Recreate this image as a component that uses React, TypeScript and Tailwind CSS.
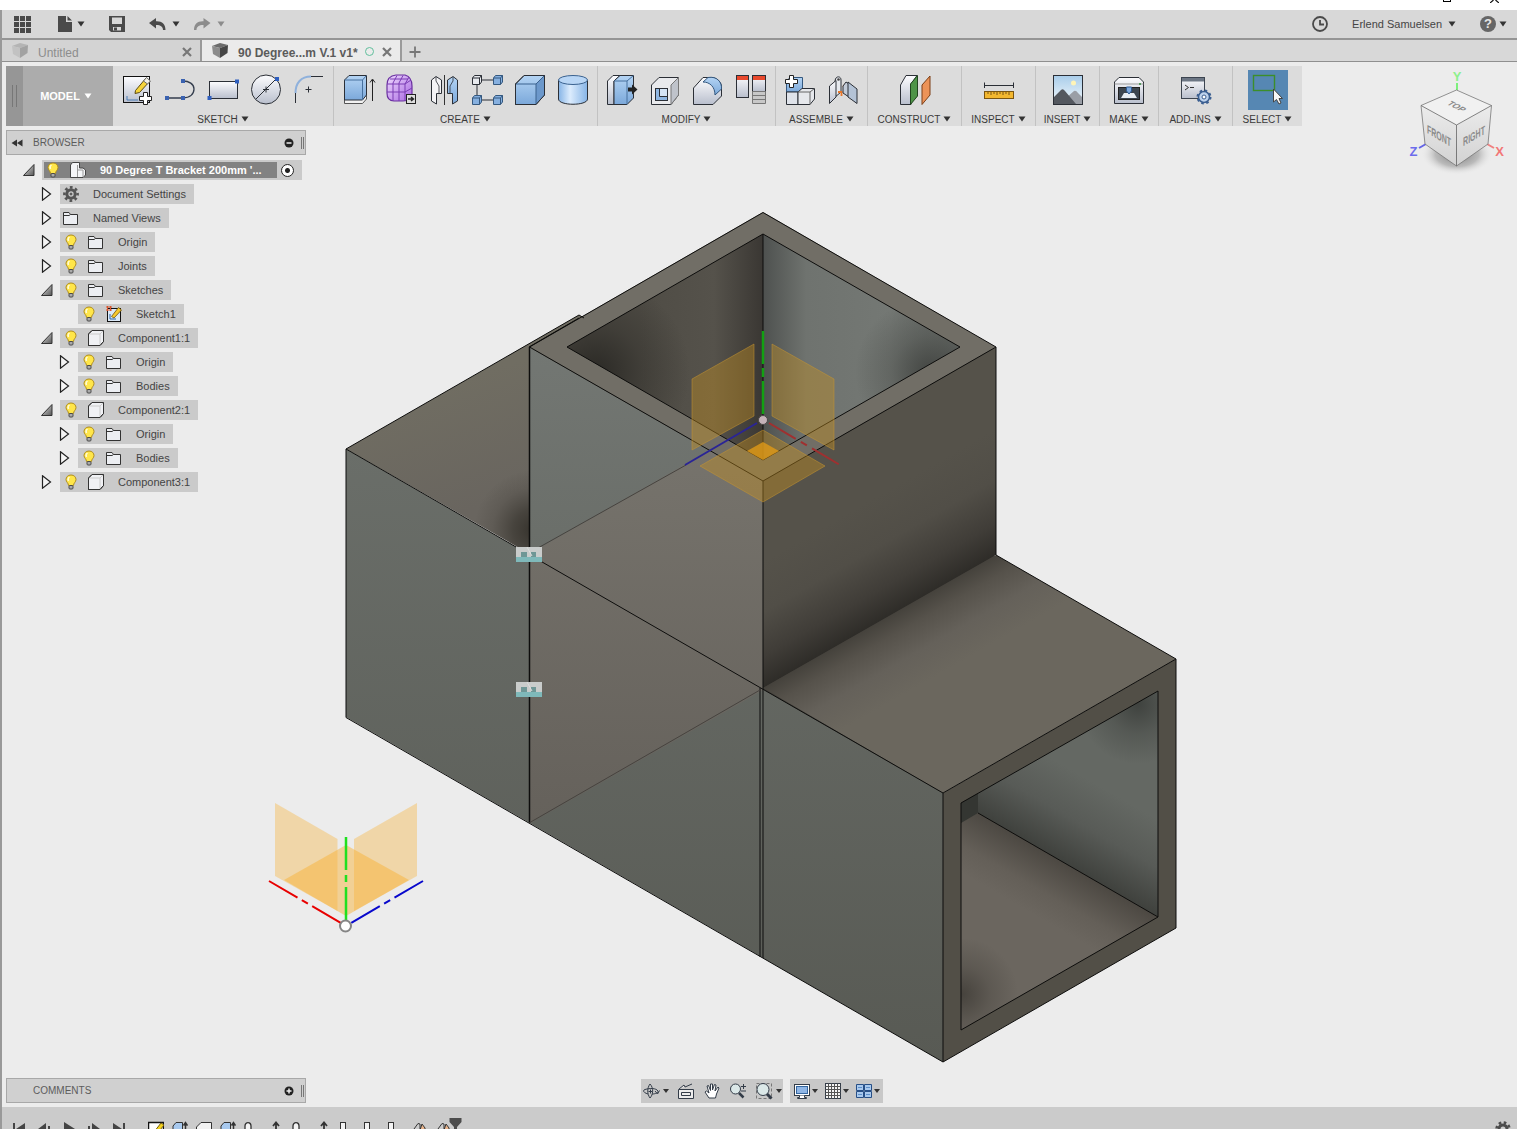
import React, { useState } from "react";

type IconFn = () => React.ReactElement;

const INK = "#2b2f36";

/* ---------- Petits éléments communs ---------- */

function Caret({ className = "text-[#333]" }: { className?: string }) {
  return (
    <svg viewBox="0 0 8 6" className={`h-[6px] w-[8px] shrink-0 ${className}`} aria-hidden="true">
      <path d="M0.500 0.500H7.500L4 5.500Z" fill="currentColor" />
    </svg>
  );
}

function Svg36({ children }: { children: React.ReactNode }) {
  return (
    <svg viewBox="0 0 36 36" className="h-9 w-9" fill="none" aria-hidden="true">
      {children}
    </svg>
  );
}

function SharedDefs() {
  return (
    <svg className="absolute h-0 w-0" aria-hidden="true">
      <defs>
        <linearGradient id="silver" x1="0" y1="0" x2="0" y2="1">
          <stop offset="0" stopColor="#fdfdff" />
          <stop offset="1" stopColor="#b9bfcd" />
        </linearGradient>
        <linearGradient id="blue" x1="0" y1="0" x2="0" y2="1">
          <stop offset="0" stopColor="#b4d4f4" />
          <stop offset="1" stopColor="#7ba8da" />
        </linearGradient>
        <linearGradient id="cyl" x1="0" y1="0" x2="1" y2="0">
          <stop offset="0" stopColor="#86b4e6" />
          <stop offset="0.4" stopColor="#dcecfd" />
          <stop offset="1" stopColor="#86b4e6" />
        </linearGradient>
        <linearGradient id="purple" x1="0" y1="0" x2="1" y2="1">
          <stop offset="0" stopColor="#f0dcff" />
          <stop offset="1" stopColor="#a765e0" />
        </linearGradient>
        <linearGradient id="sky" x1="0" y1="0" x2="0" y2="1">
          <stop offset="0" stopColor="#a9cdea" />
          <stop offset="1" stopColor="#f3f8fc" />
        </linearGradient>
        <linearGradient id="tri" x1="0" y1="0" x2="1" y2="1">
          <stop offset="0" stopColor="#e8e8e8" />
          <stop offset="1" stopColor="#555" />
        </linearGradient>
      </defs>
    </svg>
  );
}

/* ---------- Icônes de la barre d'outils ---------- */

const SketchIcon: IconFn = () => (
  <Svg36>
    <rect x="4.500" y="4.500" width="26" height="26" fill="url(#silver)" stroke="#111" />
    <path d="M8 24V28H19" stroke="#4a7db5" />
    <path d="M16.500 18.500L27 6L31 9L20.500 20.500L16 21.500Z" fill="#f5d33a" stroke="#5b4a12" />
    <path d="M24.500 9L27.500 5.500L31.500 9L28.500 12Z" fill="#f3f0e6" stroke="#6b6b6b" />
    <path d="M24.500 20.500H28.500V24.500H32.500V28.500H28.500V32.500H24.500V28.500H20.500V24.500H24.500Z" fill="#fff" stroke="#222" />
  </Svg36>
);

const SplineIcon: IconFn = () => (
  <Svg36>
    <path d="M5 26H21C28 26 32 22 32 17C32 12 27 9 21 9" stroke="#333d4d" strokeWidth="1.300" />
    <path d="M3 24h4v4h-4zM19 24h4v4h-4zM19 7h4v4h-4z" fill="#3a62b0" />
  </Svg36>
);

const RectIcon: IconFn = () => (
  <Svg36>
    <rect x="4.500" y="9.500" width="28" height="17" fill="url(#silver)" stroke={INK} />
    <path d="M2.500 24h4v4h-4zM30 7.500h4v4h-4z" fill="#2f5fc0" />
  </Svg36>
);

const CircleIcon: IconFn = () => (
  <Svg36>
    <circle cx="18" cy="17.500" r="14.500" fill="url(#silver)" stroke={INK} />
    <path d="M8 27L28 7M18 14.500V20.500M15 17.500H21" stroke={INK} />
    <path d="M27 5h4v4h-4z" fill="#2f5fc0" />
  </Svg36>
);

const FilletIcon: IconFn = () => (
  <Svg36>
    <path d="M4.500 31V21M20 4.500H32" stroke={INK} />
    <path d="M4.500 21C4.500 11 10 4.500 20 4.500" stroke="#8fb1dc" strokeWidth="2" />
    <path d="M17.500 14.500V20.500M14.500 17.500H20.500" stroke={INK} />
  </Svg36>
);

const ExtrudeIcon: IconFn = () => (
  <Svg36>
    <path d="M4.500 27H22.500L26.500 21V27L22.500 31.500H4.500Z" fill="#f2f2f2" stroke="#555" />
    <path d="M4.500 8L9 3.500H26.500V23L22.500 28H4.500Z" fill="url(#blue)" stroke={INK} />
    <path d="M4.500 8H22.500L26.500 3.500M22.500 8V28" stroke="#46709e" />
    <path d="M32.500 29V8M30 10.500L32.500 7L35 10.500" stroke="#222" />
  </Svg36>
);

const FormIcon: IconFn = () => (
  <Svg36>
    <path d="M4 13Q4 4 13 3H22Q29 5 29 14V22Q29 29 20 29H11Q4 29 4 21Z" fill="url(#purple)" stroke="#6a30a0" strokeWidth="1.200" />
    <path d="M4 12H22L28 8M4 20H22L29 16M10 29V11L14 3.500M16 29V11L20 3.500M22 29V12L26 5M7 7H25" stroke="#7a3cb4" />
    <rect x="23.500" y="22.500" width="9" height="9" fill="#ddd" stroke="#222" />
    <path d="M25 27H30M28 25L30.500 27L28 29" stroke="#222" strokeWidth="1.400" />
  </Svg36>
);

const MirrorIcon: IconFn = () => (
  <Svg36>
    <path d="M18.500 3V33" stroke="#333" />
    <path d="M5.500 8L10 4.500L15.500 8V21.500H10.500V32L5.500 29Z" fill="#f4f4f6" stroke={INK} />
    <path d="M31.500 8L27 4.500L21.500 8V21.500H26.500V32L31.500 29Z" fill="url(#blue)" stroke={INK} />
    <path d="M10 5V9L13 14V21M27 5V9L24 14V21" stroke={INK} strokeWidth="0.800" />
  </Svg36>
);

const PatternIcon: IconFn = () => (
  <Svg36>
    <path d="M8 12V25M13 8H24M13 28H24" stroke={INK} />
    <path d="M3.500 6L5.500 3.500H12.500V10L10.500 12.500H3.500ZM3.500 6H10.500V12.500M10.500 6L12.500 3.500" fill="#e8eaee" stroke={INK} />
    {[
      [21, 0],
      [0, 20],
      [21, 20],
    ].map(([x, y]) => (
      <path key={`${x}-${y}`} transform={`translate(${x} ${y})`} d="M3.500 6L5.500 3.500H12.500V10L10.500 12.500H3.500ZM3.500 6H10.500V12.500M10.500 6L12.500 3.500" fill="#86b0e0" stroke="#34587f" />
    ))}
  </Svg36>
);

const BoxIcon: IconFn = () => (
  <Svg36>
    <path d="M3.500 12L12 3.500H32.500V23L24 32.500H3.500Z" fill="url(#blue)" stroke={INK} />
    <path d="M24 12L32.500 3.500V23L24 32.500Z" fill="#6c98cb" />
    <path d="M3.500 12H24L32.500 3.500M24 12V32.500" stroke="#3b628f" />
    <path d="M3.500 12L12 3.500H32.500V23L24 32.500H3.500Z" stroke={INK} />
  </Svg36>
);

const CylinderIcon: IconFn = () => (
  <Svg36>
    <path d="M3.500 8V27C3.500 34 32.500 34 32.500 27V8Z" fill="url(#cyl)" stroke={INK} />
    <ellipse cx="18" cy="8" rx="14.500" ry="4.500" fill="#b9d6f5" stroke="#3b628f" />
  </Svg36>
);

const PressPullIcon: IconFn = () => (
  <Svg36>
    <path d="M3.500 9L9 3.500H16L10 9V32.500H3.500Z" fill="url(#silver)" stroke={INK} />
    <path d="M10 9L16 3.500H29.500V26L23 32.500H10Z" fill="url(#blue)" stroke={INK} />
    <path d="M10 9H23L29.500 3.500M23 9V32.500" stroke="#46709e" />
    <path d="M24 15.500H28V12.500L33.500 17.500L28 22.500V19.500H24Z" fill="#222" />
  </Svg36>
);

const ShellIcon: IconFn = () => (
  <Svg36>
    <path d="M4.500 13L12 5.500H31.500V23L24 32.500H4.500Z" fill="#e9eaed" stroke={INK} />
    <path d="M24 13L31.500 5.500V23L24 32.500Z" fill="#bfc3cb" stroke="#777" />
    <rect x="8.500" y="16.500" width="12" height="12" fill="#8fb6e2" stroke={INK} />
    <path d="M12.500 16.500V24.500H20.500" stroke={INK} />
    <rect x="13" y="17" width="7" height="7" fill="#d5e4f5" />
  </Svg36>
);

const ModFilletIcon: IconFn = () => (
  <Svg36>
    <path d="M3.500 16L13 5.500H22C28 6 32 11 31.500 16V24L23 32.500H3.500Z" fill="url(#silver)" stroke={INK} />
    <path d="M13 10L18 5.500C27 4 32 10 31.500 17L25 23C25 15 20 10 13 10Z" fill="url(#blue)" stroke="#34587f" />
  </Svg36>
);

const ParamsIcon: IconFn = () => (
  <Svg36>
    <rect x="3.500" y="3.500" width="12" height="22" fill="url(#silver)" stroke={INK} />
    <rect x="4" y="4" width="11" height="4" fill="#e8492d" />
    <rect x="19.500" y="3.500" width="13" height="16" fill="url(#silver)" stroke={INK} />
    <rect x="20" y="4" width="12" height="4" fill="#e8492d" />
    <path d="M19.500 19.500H32.500V31.500H19.500ZM19.500 23.500H32.500M19.500 27.500H32.500" fill="#c8c8c8" stroke="#777" />
  </Svg36>
);

const ComponentIcon: IconFn = () => (
  <Svg36>
    <path d="M4.500 9L8 5.500H20.500V18L16 20H4.500Z" fill="url(#blue)" stroke="#34587f" />
    <path d="M4.500 20H16V32.500H4.500Z" fill="#dfe3ea" stroke={INK} />
    <path d="M16 20L20 16.500H32.500V27L28 32.500H16Z" fill="#e6e8ec" stroke={INK} />
    <path d="M16 20H28L32.500 16.500M28 20V32.500" stroke="#666" />
    <path d="M7.500 3.500H11.500V7.500H15.500V11.500H11.500V15.500H7.500V11.500H3.500V7.500H7.500Z" fill="#fff" stroke="#222" />
  </Svg36>
);

const JointIcon: IconFn = () => (
  <Svg36>
    <path d="M9 13L10.500 7C11.500 4 16 4 16 8V20L9 26Z" fill="#e6e9ee" stroke={INK} />
    <path d="M4.500 14L11 8.500V25L4.500 31.500Z" fill="url(#silver)" stroke={INK} />
    <circle cx="13.500" cy="7.500" r="1.300" fill="#444" />
    <path d="M13 20H16.500V24M18 15L21 12" stroke="#e8772a" strokeWidth="1.800" />
    <path d="M18 14L21 10L24 12V25L18 21Z" fill="#c2cbd8" stroke={INK} />
    <path d="M23 10L32 17V31.500L23 25Z" fill="#b4c3d6" stroke={INK} />
  </Svg36>
);

const ConstructIcon: IconFn = () => (
  <Svg36>
    <path d="M3.500 13L9 3.500H20L14 12V32.500H3.500Z" fill="url(#silver)" stroke={INK} />
    <path d="M13.500 12L20.500 3.500V24L13.500 32.500Z" fill="#4e9448" stroke="#21451f" />
    <path d="M25 13L33 4V23L25 32.500Z" fill="#ec9358" stroke="#7c3f16" />
  </Svg36>
);

const InspectIcon: IconFn = () => (
  <Svg36>
    <path d="M3.500 13.500H32.500M3.500 10.500V16M32.500 10.500V16" stroke={INK} />
    <rect x="3.500" y="19.500" width="29" height="7" fill="#f3b72e" stroke="#7b5510" />
    <path d="M7 20v2M10 20v3M13 20v2M16 20v3M19 20v2M22 20v3M25 20v2M28 20v3" stroke="#7b5510" />
  </Svg36>
);

const InsertIcon: IconFn = () => (
  <Svg36>
    <rect x="3.500" y="3.500" width="29" height="29" fill="url(#sky)" />
    <circle cx="23.500" cy="11" r="2.500" fill="#fff4b8" />
    <path d="M16 26L24 19Q26 18 28 21L32 25V32H16Z" fill="#9a9ea6" />
    <path d="M4 25L11 18Q13 16 15 19L26 32H4Z" fill="#54585f" />
    <rect x="3.500" y="3.500" width="29" height="29" stroke={INK} />
  </Svg36>
);

const MakeIcon: IconFn = () => (
  <Svg36>
    <path d="M3.500 10L8 5.500H28L32.500 10V31.500H3.500Z" fill="url(#silver)" stroke={INK} />
    <path d="M3.500 12H32.500" stroke="#999" />
    <circle cx="29" cy="12" r="1" fill="#2f8c3a" />
    <rect x="7.500" y="15.500" width="21" height="12" fill="#3d4650" stroke="#222" />
    <path d="M10 26L13 21H23L26 26Z" fill="#e8edf3" />
    <path d="M15.500 15H20.500V19L18 22L15.500 19Z" fill="#7fa9dc" stroke="#2e5b94" />
  </Svg36>
);

const AddInsIcon: IconFn = () => (
  <Svg36>
    <rect x="3.500" y="5.500" width="23" height="21" fill="url(#silver)" stroke="#3c4450" />
    <path d="M4 6H26V9.500H4Z" fill="#6c7684" />
    <path d="M7 13L10.500 15.500L7 18M12 15.500H16" stroke="#333" />
    <circle cx="26" cy="25" r="5.500" fill="#bdd2ec" stroke="#3b5f91" strokeWidth="1.500" />
    <circle cx="26" cy="25" r="6.500" stroke="#3b5f91" strokeWidth="2" strokeDasharray="2.500 2.600" />
    <circle cx="26" cy="25" r="2" fill="#fff" stroke="#3b5f91" />
  </Svg36>
);

const SelectIcon: IconFn = () => (
  <Svg36>
    <rect x="3.500" y="3.500" width="21" height="15" stroke="#3c8e2a" strokeWidth="1.400" />
    <path d="M23.500 17V30L26.500 27.500L29 32L31 31L29 26.500H32.500Z" fill="#f7f7f7" stroke="#444" />
  </Svg36>
);

interface ToolGroup {
  label: string;
  tools: { name: string; icon: IconFn }[];
}

const TOOL_GROUPS: ToolGroup[] = [
  {
    label: "SKETCH",
    tools: [
      { name: "Create Sketch", icon: SketchIcon },
      { name: "Line", icon: SplineIcon },
      { name: "Rectangle", icon: RectIcon },
      { name: "Circle", icon: CircleIcon },
      { name: "Fillet", icon: FilletIcon },
    ],
  },
  {
    label: "CREATE",
    tools: [
      { name: "Extrude", icon: ExtrudeIcon },
      { name: "Create Form", icon: FormIcon },
      { name: "Mirror", icon: MirrorIcon },
      { name: "Pattern", icon: PatternIcon },
      { name: "Box", icon: BoxIcon },
      { name: "Cylinder", icon: CylinderIcon },
    ],
  },
  {
    label: "MODIFY",
    tools: [
      { name: "Press Pull", icon: PressPullIcon },
      { name: "Shell", icon: ShellIcon },
      { name: "Modify Fillet", icon: ModFilletIcon },
      { name: "Parameters", icon: ParamsIcon },
    ],
  },
  {
    label: "ASSEMBLE",
    tools: [
      { name: "New Component", icon: ComponentIcon },
      { name: "Joint", icon: JointIcon },
    ],
  },
  { label: "CONSTRUCT", tools: [{ name: "Offset Plane", icon: ConstructIcon }] },
  { label: "INSPECT", tools: [{ name: "Measure", icon: InspectIcon }] },
  { label: "INSERT", tools: [{ name: "Image", icon: InsertIcon }] },
  { label: "MAKE", tools: [{ name: "3D Print", icon: MakeIcon }] },
  { label: "ADD-INS", tools: [{ name: "Scripts", icon: AddInsIcon }] },
  { label: "SELECT", tools: [{ name: "Select", icon: SelectIcon }] },
];

const GROUP_WIDTH: Record<string, string> = {
  SKETCH: "w-[220px]",
  CREATE: "w-[264px]",
  MODIFY: "w-[178px]",
  ASSEMBLE: "w-[92px]",
  CONSTRUCT: "w-[94px]",
  INSPECT: "w-[74px]",
  INSERT: "w-[64px]",
  MAKE: "w-[59px]",
  "ADD-INS": "w-[74px]",
  SELECT: "w-[70px]",
};

function Ribbon() {
  return (
    <div className="relative ml-1 mt-1 flex h-[60px] w-fit shrink-0 bg-[#dcdcdc]">
      <button type="button" className="flex w-[107px] items-stretch bg-[#acacac] text-[11px] font-bold text-white">
        <span className="flex w-[17px] items-center justify-center gap-[3px] bg-[#969696]">
          <span className="h-[22px] w-px bg-[#777]" />
          <span className="h-[22px] w-px bg-[#777]" />
        </span>
        <span className="flex flex-1 items-center justify-center gap-1 pr-1">
          MODEL
          <Caret className="text-white" />
        </span>
      </button>
      {TOOL_GROUPS.map((group, i) => (
        <div
          key={group.label}
          className={`flex flex-col items-center pt-1 ${GROUP_WIDTH[group.label]} ${
            i > 0 ? "border-l border-[#c2c2c2]" : ""
          }`}
        >
          <div className="flex h-10 items-center">
            {group.tools.map(({ name, icon: Icon }) => (
              <button
                key={name}
                type="button"
                aria-label={name}
                className={`flex h-10 items-center justify-center ${
                  name === "Select" ? "w-10 bg-[#5687b3]" : "w-[43px]"
                }`}
              >
                <Icon />
              </button>
            ))}
          </div>
          <button type="button" className="mt-[2px] flex h-[14px] items-center gap-[3px] text-[10px] text-[#3a3a3a]">
            {group.label}
            <Caret />
          </button>
        </div>
      ))}
    </div>
  );
}

/* ---------- Barre du haut et onglets ---------- */

function TopBar() {
  return (
    <header className="flex h-[30px] shrink-0 items-center border-b-2 border-[#959595] bg-[#d8d8d8] pl-3 pr-[10px] text-[#4a4a4a]">
      <button type="button" aria-label="Data panel">
        <svg viewBox="0 0 18 18" className="size-[18px]" fill="currentColor">
          <path d="M0 1h5v5H0zM6 1h5v5H6zM12 1h5v5h-5zM0 7h5v5H0zM6 7h5v5H6zM12 7h5v5h-5zM0 13h5v5H0zM6 13h5v5H6zM12 13h5v5h-5z" />
        </svg>
      </button>
      <button type="button" aria-label="File" className="ml-[26px] flex items-center gap-[5px]">
        <svg viewBox="0 0 14 16" className="h-4 w-[14px]" fill="currentColor">
          <path d="M0 0H8V6H14V16H0ZM9.500 0L14 4.500H9.500Z" />
        </svg>
        <Caret />
      </button>
      <button type="button" aria-label="Save" className="ml-6">
        <svg viewBox="0 0 16 16" className="size-4" fill="currentColor">
          <path fillRule="evenodd" d="M0 0H16V16H2L0 14ZM3 1.500V8H13V1.500ZM4 11V14.500H12V11Z" />
          <rect x="5" y="11.500" width="3" height="3" />
        </svg>
      </button>
      <button type="button" aria-label="Undo" className="ml-6 flex items-center gap-[6px]">
        <svg viewBox="0 0 17 12" className="h-3 w-[17px]" fill="currentColor">
          <path d="M0 5L7 0V3.300C13 3 16.500 6 16.500 12H14C14 8.500 11 6.800 7 7V10.500Z" />
        </svg>
        <Caret />
      </button>
      <button type="button" aria-label="Redo" className="ml-[14px] flex items-center gap-[6px] text-[#8c8c8c]">
        <svg viewBox="0 0 17 12" className="h-3 w-[17px]" fill="currentColor">
          <path d="M16.500 5L9.500 0V3.300C3.500 3 0 6 0 12H2.500C2.500 8.500 5.500 6.800 9.500 7V10.500Z" />
        </svg>
        <Caret className="text-[#8c8c8c]" />
      </button>

      <button type="button" aria-label="Job status" className="ml-auto">
        <svg viewBox="0 0 16 16" className="size-4" fill="none" stroke="currentColor" strokeWidth="1.800">
          <circle cx="8" cy="8" r="7" />
          <path d="M8 4V8.500H12" />
        </svg>
      </button>
      <button type="button" className="ml-6 flex items-center gap-[6px] text-[11px] text-[#444]">
        Erlend Samuelsen
        <Caret />
      </button>
      <button type="button" aria-label="Help" className="ml-6 flex items-center gap-[3px]">
        <span className="flex size-4 items-center justify-center rounded-full bg-[#666] text-[13px] font-bold leading-4 text-[#e6e6e6]">
          ?
        </span>
        <Caret />
      </button>
    </header>
  );
}

function TabCube({ dark }: { dark?: boolean }) {
  return (
    <svg viewBox="0 0 16 16" className="size-4 shrink-0" aria-hidden="true">
      <path d="M0 3L8 0L16 2L8 5Z" fill={dark ? "#6b6b6b" : "#b4b4b4"} />
      <path d="M0 3L8 5V15L1 11Z" fill={dark ? "#8c8c8c" : "#c2c2c2"} />
      <path d="M16 2L8 5V15L15.500 10Z" fill={dark ? "#464646" : "#a2a2a2"} />
    </svg>
  );
}

function CloseMark() {
  return (
    <svg viewBox="0 0 10 10" className="size-[10px]" stroke="#777" strokeWidth="2.200" aria-hidden="true">
      <path d="M1 1L9 9M9 1L1 9" />
    </svg>
  );
}

function TabBar() {
  return (
    <nav className="flex h-[22px] shrink-0 border-b border-[#8f8f8f] bg-[#d8d8d8] text-[12px]">
      <div className="flex w-[198px] items-center bg-[#d3d3d3] pl-[10px] pr-2">
        <TabCube />
        <button type="button" className="ml-[10px] flex-1 pt-[5px] text-left leading-4 text-[#8d8d8d]">
          Untitled
        </button>
        <button type="button" aria-label="Close Untitled" className="pt-[2px]">
          <CloseMark />
        </button>
      </div>
      <div className="flex w-[202px] items-center border-x-2 border-[#9a9a9a] bg-[#ebebeb] pl-[10px] pr-2">
        <TabCube dark />
        <button type="button" className="ml-[10px] flex-1 whitespace-nowrap pt-[5px] text-left font-bold leading-4 text-[#5b5b5b]">
          90 Degree...m V.1 v1*
        </button>
        <span className="mr-2 mt-[2px] size-[9px] rounded-full border border-[#62bf9d]" />
        <button type="button" aria-label="Close 90 Degree" className="pt-[2px]">
          <CloseMark />
        </button>
      </div>
      <button type="button" aria-label="New tab" className="ml-[7px] pt-[2px]">
        <svg viewBox="0 0 12 12" className="size-3" stroke="#777" strokeWidth="1.800">
          <path d="M6 0.500V11.500M0.500 6H11.500" />
        </svg>
      </button>
    </nav>
  );
}

/* ---------- Navigateur ---------- */

function Bulb() {
  return (
    <svg viewBox="0 0 12 16" className="h-4 w-3 shrink-0" aria-hidden="true">
      <path d="M6 1C2.800 1 1 3.200 1 5.600C1 8 3.500 9 3.500 11.500H8.500C8.500 9 11 8 11 5.600C11 3.200 9.200 1 6 1Z" fill="#ffe64a" stroke="#b08d1c" />
      <path d="M4.500 3C3 4 3 6 3.500 7" stroke="#fffbd8" strokeWidth="1.500" fill="none" />
      <rect x="4" y="11.500" width="4" height="3.500" rx="1" fill="#aaa" stroke="#4a4a4a" />
    </svg>
  );
}

type NodeIcon = "folder" | "gear" | "component" | "assembly" | "sketch";

function TreeIcon({ kind }: { kind: NodeIcon }) {
  if (kind === "gear") {
    return (
      <svg viewBox="0 0 16 16" className="size-4 shrink-0" fill="none" stroke="#555" aria-hidden="true">
        <circle cx="8" cy="8" r="4.200" strokeWidth="3" />
        <circle cx="8" cy="8" r="6.600" strokeWidth="2.600" strokeDasharray="2.700 2.480" strokeDashoffset="1.300" />
        <circle cx="8" cy="8" r="1" fill="#555" />
      </svg>
    );
  }
  if (kind === "component") {
    return (
      <svg viewBox="0 0 16 16" className="size-4 shrink-0" aria-hidden="true">
        <path d="M0.500 4L4 0.500H15.500V11.500L12 15.500H0.500Z" fill="#f0f1f4" stroke="#333" strokeLinejoin="round" />
        <path d="M0.500 4H12L15.500 0.500M12 4V15.500" stroke="#ccc" fill="none" />
        <path d="M0.500 4L4 0.500H15.500V11.500L12 15.500H0.500Z" fill="none" stroke="#333" strokeLinejoin="round" />
      </svg>
    );
  }
  if (kind === "assembly") {
    return (
      <svg viewBox="0 0 16 16" className="size-4 shrink-0" aria-hidden="true">
        <path d="M0.500 3L2.500 0.500H9.500V6H13L15.500 8V13L13 15.500H0.500Z" fill="#f4f5f7" stroke="#444" strokeLinejoin="round" />
        <path d="M7.500 3V15M7.500 8H13V15" stroke="#999" fill="none" />
      </svg>
    );
  }
  if (kind === "sketch") {
    return (
      <svg viewBox="0 0 16 16" className="size-4 shrink-0" aria-hidden="true">
        <rect x="1.500" y="2.500" width="13" height="13" fill="#dbe9f7" stroke="#111" />
        <path d="M4 8V13H10" stroke="#2b62a8" fill="none" />
        <path d="M5.500 10.500L12.500 1.500L15.500 4L8 12Z" fill="#f7c92e" stroke="#6d530d" strokeWidth="0.800" />
        <path d="M0 1H6M0 4H6M1.500 0V5M4.500 0V5" stroke="#d8532c" />
      </svg>
    );
  }
  return (
    <svg viewBox="0 0 16 16" className="size-4 shrink-0" aria-hidden="true">
      <path d="M0.500 2.500H6L7.500 4.500H14.500V14.500H0.500Z" fill="#eceef2" stroke="#333" />
      <path d="M0.500 5.500H6L7.500 4.500" stroke="#333" fill="none" />
    </svg>
  );
}

interface TreeNode {
  label: string;
  depth: number;
  icon: NodeIcon;
  bulb?: boolean;
  open?: boolean;
  leaf?: boolean;
}

const TREE: TreeNode[] = [
  { label: "Document Settings", depth: 1, icon: "gear" },
  { label: "Named Views", depth: 1, icon: "folder" },
  { label: "Origin", depth: 1, icon: "folder", bulb: true },
  { label: "Joints", depth: 1, icon: "folder", bulb: true },
  { label: "Sketches", depth: 1, icon: "folder", bulb: true, open: true },
  { label: "Sketch1", depth: 2, icon: "sketch", bulb: true, leaf: true },
  { label: "Component1:1", depth: 1, icon: "component", bulb: true, open: true },
  { label: "Origin", depth: 2, icon: "folder", bulb: true },
  { label: "Bodies", depth: 2, icon: "folder", bulb: true },
  { label: "Component2:1", depth: 1, icon: "component", bulb: true, open: true },
  { label: "Origin", depth: 2, icon: "folder", bulb: true },
  { label: "Bodies", depth: 2, icon: "folder", bulb: true },
  { label: "Component3:1", depth: 1, icon: "component", bulb: true },
];

function Expander({ open, label }: { open?: boolean; label: string }) {
  return (
    <button type="button" aria-label={`Toggle ${label}`} className="w-5 shrink-0 pl-px">
      <svg viewBox="0 0 12 14" className="h-[14px] w-3" aria-hidden="true">
        {open ? (
          <path d="M11 1.500V12.500H0.500Z" fill="url(#tri)" stroke="#333" />
        ) : (
          <path d="M1.500 0.800L9.500 7L1.500 13.200Z" fill="#f4f4f4" stroke="#222" strokeWidth="1.200" />
        )}
      </svg>
    </button>
  );
}

function PanelHeader({ title, open }: { title: string; open?: boolean }) {
  return (
    <div className="flex h-[25px] w-[300px] items-center border border-[#a8a8a8] bg-[#d0d0d0] text-[10px] text-[#5c5c5c]">
      <button type="button" aria-label={`Collapse ${title}`} className="w-[26px] pl-1">
        {open && (
          <svg viewBox="0 0 12 8" className="h-2 w-3" fill="#333">
            <path d="M6 0.500V7.500L0.500 4ZM11.500 0.500V7.500L6 4Z" />
          </svg>
        )}
      </button>
      <span className="flex-1">{title}</span>
      <button type="button" aria-label={`Options ${title}`}>
        <svg viewBox="0 0 10 10" className="size-[10px]">
          <circle cx="5" cy="5" r="4.500" fill="#222" />
          <path d={open ? "M2.500 5H7.500" : "M2.500 5H7.500M5 2.500V7.500"} stroke="#eee" strokeWidth="1.500" />
        </svg>
      </button>
      <span className="ml-[7px] mr-[1px] h-3 w-[3px] border-x border-[#777]" />
    </div>
  );
}

function Browser() {
  const [active, setActive] = useState(true);

  return (
    <aside className="relative ml-1 mt-1 w-fit">
      <PanelHeader title="BROWSER" open />
      <ul className="mt-[5px] space-y-1 pl-4 text-[11px] text-[#444]">
        <li className="flex h-5 items-center">
          <Expander open label="root" />
          <div className="flex h-5 w-[260px] items-center bg-[#cacaca] pl-[2px]">
            <div className="flex h-4 w-[233px] items-center bg-[#828282] pl-[3px] font-bold text-white">
              <Bulb />
              <span className="ml-[11px]">
                <TreeIcon kind="assembly" />
              </span>
              <span className="ml-[14px] whitespace-nowrap">90 Degree T Bracket 200mm '...</span>
            </div>
            <input
              type="radio"
              aria-label="Activate component"
              checked={active}
              onChange={() => setActive(true)}
              className="ml-1 size-[13px] appearance-none rounded-full border border-[#222] bg-white bg-[radial-gradient(circle,#222_2px,transparent_3px)]"
            />
          </div>
        </li>
        {TREE.map((node, i) => (
          <li key={i} className={`flex h-5 items-center ${node.depth === 1 ? "pl-[18px]" : "pl-9"}`}>
            {node.leaf ? <span className="w-5" /> : <Expander open={node.open} label={node.label} />}
            <div className="flex h-5 items-center bg-[#cacaca] pl-[3px] pr-2">
              {node.bulb && (
                <span className="mr-[11px] pl-[2px]">
                  <Bulb />
                </span>
              )}
              <TreeIcon kind={node.icon} />
              <span className="ml-[14px] whitespace-nowrap">{node.label}</span>
            </div>
          </li>
        ))}
      </ul>
    </aside>
  );
}

/* ---------- Cube d'orientation ---------- */

function ViewCube() {
  return (
    <svg viewBox="1402 62 110 122" className="absolute right-[5px] top-0 h-[122px] w-[110px]" fontFamily="Liberation Sans, Arial, sans-serif">
      <defs>
        <radialGradient id="cubeShadow">
          <stop offset="0" stopColor="#666" stopOpacity="0.900" />
          <stop offset="0.600" stopColor="#999" stopOpacity="0.600" />
          <stop offset="1" stopColor="#ececec" stopOpacity="0" />
        </radialGradient>
        <linearGradient id="cubeSide" x1="0" y1="0" x2="0" y2="1">
          <stop offset="0" stopColor="#ececec" />
          <stop offset="1" stopColor="#d2d2d2" />
        </linearGradient>
      </defs>
      <ellipse cx="1457" cy="154" rx="36" ry="21" fill="url(#cubeShadow)" />
      <path d="M1457 83V90" stroke="#7df07d" strokeWidth="2" />
      <path d="M1419 148L1426 144" stroke="#6464e6" strokeWidth="2" />
      <path d="M1494 148L1487 144" stroke="#f08080" strokeWidth="2" />
      <path d="M1421 105.500L1456.500 125V166L1425 144Z" fill="url(#cubeSide)" />
      <path d="M1491.500 105.500L1456.500 125V166L1488 144Z" fill="url(#cubeSide)" />
      <path d="M1456.500 90L1491.500 105.500L1456.500 125L1421 105.500Z" fill="#f1f1f1" />
      <path d="M1456.500 90L1491.500 105.500L1488 144L1456.500 166L1425 144L1421 105.500Z" fill="none" stroke="#777" strokeWidth="0.800" />
      <path d="M1421 105.500L1456.500 125L1491.500 105.500M1456.500 125V166" fill="none" stroke="#666" strokeWidth="0.800" />
      <g fill="#8a8a8a" fontSize="11" textAnchor="middle" fontWeight="bold">
        <text transform="matrix(0.700 0.360 -0.700 0.420 1454 108)">TOP</text>
        <text transform="matrix(0.640 0.370 0 1.100 1439 140)">FRONT</text>
        <text transform="matrix(0.640 -0.370 0 1.100 1474 140)">RIGHT</text>
      </g>
      <g fontSize="13" fontWeight="bold" textAnchor="middle">
        <text x="1457" y="81" fill="#8df08d">Y</text>
        <text x="1413.500" y="156" fill="#6c6cec">Z</text>
        <text x="1499.500" y="156" fill="#f27676">X</text>
      </g>
    </svg>
  );
}

/* ---------- Modèle 3D ---------- */

function JointGlyph({ x, y }: { x: number; y: number }) {
  return (
    <g transform={`translate(${x} ${y})`}>
      <rect width="26" height="15" fill="#c9cccb" />
      <path d="M0 10H26V15H0Z" fill="#7fb9ba" />
      <path d="M5 10V5H11V10ZM15 10V5H20V10Z" fill="#6f9796" />
      <path d="M11 0L16 9" stroke="#ddd" />
    </g>
  );
}

function ModelCanvas() {
  return (
    <svg viewBox="2 62 1515 1045" className="absolute inset-0 h-full w-full" role="img" aria-label="90 degree T bracket">
      <defs>
        <linearGradient id="gTopL" gradientUnits="userSpaceOnUse" x1="430" y1="390" x2="470" y2="510">
          <stop offset="0" stopColor="#706d62" />
          <stop offset="1" stopColor="#69655f" />
        </linearGradient>
        <radialGradient id="gTopLShade" gradientUnits="userSpaceOnUse" cx="534" cy="530" r="60">
          <stop offset="0" stopColor="#28251f" stopOpacity="0.800" />
          <stop offset="0.350" stopColor="#2c2923" stopOpacity="0.550" />
          <stop offset="0.700" stopColor="#35312b" stopOpacity="0.180" />
          <stop offset="1" stopColor="#35312b" stopOpacity="0" />
        </radialGradient>
        <linearGradient id="gFront" gradientUnits="userSpaceOnUse" x1="0" y1="449" x2="0" y2="1062">
          <stop offset="0" stopColor="#6a6e69" />
          <stop offset="1" stopColor="#585a54" />
        </linearGradient>
        <linearGradient id="gTowerL" gradientUnits="userSpaceOnUse" x1="0" y1="347" x2="0" y2="553">
          <stop offset="0" stopColor="#737773" />
          <stop offset="1" stopColor="#6a6e69" />
        </linearGradient>
        <linearGradient id="gBrown" gradientUnits="userSpaceOnUse" x1="0" y1="450" x2="0" y2="823">
          <stop offset="0" stopColor="#76736c" />
          <stop offset="1" stopColor="#65615b" />
        </linearGradient>
        <linearGradient id="gTowerR" gradientUnits="userSpaceOnUse" x1="825" y1="526" x2="879.500" y2="621.500">
          <stop offset="0" stopColor="#55524a" />
          <stop offset="0.400" stopColor="#514e47" />
          <stop offset="0.750" stopColor="#403d38" />
          <stop offset="1" stopColor="#2e2c28" />
        </linearGradient>
        <linearGradient id="gTopR" gradientUnits="userSpaceOnUse" x1="879.500" y1="621.500" x2="917" y2="687">
          <stop offset="0" stopColor="#45423c" />
          <stop offset="0.250" stopColor="#56524b" />
          <stop offset="0.600" stopColor="#65615a" />
          <stop offset="1" stopColor="#6b675e" />
        </linearGradient>
        <linearGradient id="gInL" gradientUnits="userSpaceOnUse" x1="640" y1="0" x2="763" y2="0">
          <stop offset="0" stopColor="#4f4c45" />
          <stop offset="0.600" stopColor="#55524b" />
          <stop offset="1" stopColor="#3a3733" />
        </linearGradient>
        <radialGradient id="gInLShade" gradientUnits="userSpaceOnUse" cx="595" cy="372" r="95">
          <stop offset="0" stopColor="#1f1e1b" stopOpacity="0.750" />
          <stop offset="0.500" stopColor="#1f1e1b" stopOpacity="0.300" />
          <stop offset="1" stopColor="#1f1e1b" stopOpacity="0" />
        </radialGradient>
        <linearGradient id="gInR" gradientUnits="userSpaceOnUse" x1="763" y1="0" x2="960" y2="0">
          <stop offset="0" stopColor="#4e514f" />
          <stop offset="0.220" stopColor="#6f736f" />
          <stop offset="0.650" stopColor="#747874" />
          <stop offset="1" stopColor="#666a66" />
        </linearGradient>
        <radialGradient id="gInRShade" gradientUnits="userSpaceOnUse" cx="930" cy="372" r="75">
          <stop offset="0" stopColor="#363835" stopOpacity="0.750" />
          <stop offset="0.500" stopColor="#363835" stopOpacity="0.300" />
          <stop offset="1" stopColor="#363835" stopOpacity="0" />
        </radialGradient>
        <linearGradient id="gHoleWall" gradientUnits="userSpaceOnUse" x1="1110" y1="792" x2="1068" y2="865">
          <stop offset="0" stopColor="#646863" />
          <stop offset="0.500" stopColor="#585b57" />
          <stop offset="1" stopColor="#3f413d" />
        </linearGradient>
        <radialGradient id="gHoleWallShade" gradientUnits="userSpaceOnUse" cx="1138" cy="704" r="60">
          <stop offset="0" stopColor="#333633" stopOpacity="0.750" />
          <stop offset="0.500" stopColor="#333633" stopOpacity="0.300" />
          <stop offset="1" stopColor="#333633" stopOpacity="0" />
        </radialGradient>
        <linearGradient id="gHoleFloor" gradientUnits="userSpaceOnUse" x1="1068" y1="865" x2="1038" y2="917">
          <stop offset="0" stopColor="#4c4842" />
          <stop offset="0.600" stopColor="#645f58" />
          <stop offset="1" stopColor="#6b665f" />
        </linearGradient>
        <radialGradient id="gHoleCorner" gradientUnits="userSpaceOnUse" cx="962" cy="994" r="56">
          <stop offset="0" stopColor="#33302b" stopOpacity="0.650" />
          <stop offset="0.500" stopColor="#33302b" stopOpacity="0.250" />
          <stop offset="1" stopColor="#33302b" stopOpacity="0" />
        </radialGradient>
      </defs>

      {/* Fond sombre sous les arêtes intérieures, évite les joints clairs entre les faces */}
      <path d="M530 350L763 215L994 348V556L1174 660L943 792V1060L530 822Z" fill="#3f3c37" />

      {/* Faces du T */}
      <path d="M346 449L579 315L584 318L530 350V554Z" fill="url(#gTopL)" />
      <path d="M346 449L579 315L584 318L530 350V554Z" fill="url(#gTopLShade)" />
      <path d="M346 449L943 793V1062L346 717Z" fill="url(#gFront)" />
      <path d="M529 347L763 481V690L529 554Z" fill="url(#gTowerL)" />
      <path d="M529 554L710 450L763 481V690L529 824Z" fill="url(#gBrown)" />
      <path d="M763 481L996 347V555L763 688Z" fill="url(#gTowerR)" />
      <path d="M763 688L996 555L1176 659L943 793Z" fill="url(#gTopR)" />
      <path d="M763 212L996 347L763 481L529 347Z" fill="#716e66" />
      <path d="M567 347L763 234V460Z" fill="url(#gInL)" />
      <path d="M567 347L763 234V460Z" fill="url(#gInLShade)" />
      <path d="M763 234L960 347L763 460Z" fill="url(#gInR)" />
      <path d="M763 234L960 347L763 460Z" fill="url(#gInRShade)" />
      <path d="M943 793L1176 659V928L943 1062Z" fill="#524f47" />
      <path d="M978 793L1158 691V917L978 813Z" fill="url(#gHoleWall)" />
      <path d="M978 793L1158 691V917L978 813Z" fill="url(#gHoleWallShade)" />
      <path d="M961 823L978 813L1158 917L961 1030Z" fill="url(#gHoleFloor)" />
      <path d="M961 823L978 813L1158 917L961 1030Z" fill="url(#gHoleCorner)" />
      <path d="M961 803L978 793V813L961 823Z" fill="#343632" />

      {/* Arêtes */}
      <g fill="none" stroke="#0d0d0c">
        <path d="M529.500 347L763 481L996 347L763 212.500Z" />
        <path d="M763 234L960 347L763 460L567 347Z" />
        <path d="M763 234V460M763 481V688" />
        <path d="M996 347V555L1176 659V928L943 1062L346 717.500V449L579 315L584 318" />
        <path d="M346 449L943 793L1176 659M943 793V1062" />
        <path d="M529.500 347V823" strokeWidth="1.500" />
        <path d="M529 347L579 318" />
        <path d="M760 688V957M763 688V958" />
        <path d="M961 803L1158 691V917L961 1030ZM978 813L1158 917" />
      </g>
      <path d="M529 553L686 465M529 823L760 690" stroke="#46433f" strokeWidth="1" />

      {/* Origine du composant actif */}
      <g fill="#c8901f" fillOpacity="0.400" stroke="#c8952f" strokeOpacity="0.500">
        <path d="M692 379L754 344V416L692 450Z" />
        <path d="M772 344L834 379V450L772 416Z" />
        <path d="M763 430L825 466L763 502L700 466Z" />
      </g>
      <path d="M747 451L763 442L779 451L763 460Z" fill="#e09a17" fillOpacity="0.800" />
      <path d="M763 331V415" stroke="#12a012" strokeWidth="2.500" strokeDasharray="33 4 9 4" />
      <path d="M757 423L685 465" stroke="#2a2496" strokeWidth="2" />
      <path d="M769 423L840 465" stroke="#a03030" strokeWidth="2" strokeDasharray="31 6 7 6" />
      <circle cx="763" cy="420" r="4.500" fill="#c4b2b8" stroke="#4b4747" />

      <JointGlyph x={516} y={547} />
      <JointGlyph x={516} y={682} />

      {/* Origine du document */}
      <g fill="#f8b02c" fillOpacity="0.350">
        <path d="M275 803L337.500 839V911L275 876Z" />
        <path d="M354 839L417 803V876L354 911Z" />
        <path d="M346 845L409 880L346 916L284 880Z" fillOpacity="0.450" />
      </g>
      <g strokeWidth="2" fill="none">
        <path d="M346 837V920" stroke="#1fe01f" strokeWidth="2.500" strokeDasharray="33 5 7 5" />
        <path d="M269 881L341 923" stroke="#e80000" strokeDasharray="33 5 7 5" />
        <path d="M423 881L351 923" stroke="#0808cc" strokeDasharray="33 5 7 5" />
      </g>
      <circle cx="345.500" cy="926" r="5.500" fill="#fff" stroke="#858585" strokeWidth="2" />
    </svg>
  );
}

/* ---------- Barre de navigation ---------- */

interface NavButtonProps {
  label: string;
  caret?: boolean;
  tight?: boolean;
  children: React.ReactNode;
}

function NavButton({ label, caret, tight, children }: NavButtonProps) {
  return (
    <button type="button" aria-label={label} className={`flex items-center ${tight ? "gap-px" : "gap-[3px]"}`}>
      <svg viewBox="0 0 18 18" className="size-[18px]" fill="none" stroke="#333c48" aria-hidden="true">
        {children}
      </svg>
      {caret && (
        <svg viewBox="0 0 6 4" className="h-1 w-[6px]" fill="#333" aria-hidden="true">
          <path d="M0 0H6L3 4Z" />
        </svg>
      )}
    </button>
  );
}

function NavBar() {
  return (
    <div className="flex h-6 gap-[7px]">
      <div className="flex items-center gap-2 bg-[#c8c8c8] px-px">
        <NavButton label="Orbit" caret>
          <path d="M8 2C5 6 5 12 8 16C11 13 12 6 8 2ZM6 12C2 11 0 8.500 3 7.500C8 6 14 6 16 9C16.500 11 13 12 10 12M13 9L15.500 12L17.500 8.500M6.500 9.500H10.500M8.500 7.500V11.500" />
        </NavButton>
        <NavButton label="Look At">
          <path d="M1.500 7.500H16.500V16.500H1.500ZM4.500 10.500H13.500V13.500H4.500ZM2 7L7 3L8 5L15 2" fill="#ececec" />
        </NavButton>
        <NavButton label="Pan">
          <path d="M6 16L2 10L3.500 9L6 11L4 4L5.500 3.500L7.500 8.500L7.500 2H9.500V8L11.500 2.500L13 3L12 9L15 5L16 6L13.500 12L12.500 16Z" fill="#fff" />
        </NavButton>
        <NavButton label="Zoom">
          <circle cx="6.500" cy="7" r="5" fill="#dbe8e8" />
          <path d="M10 11L14.500 15.500" strokeWidth="2.500" />
          <path d="M12 4.500H17M14.500 2V7M12 9H17" />
        </NavButton>
        <NavButton label="Fit" caret>
          <path d="M1.500 1.500H16.500V16.500H1.500Z" strokeDasharray="3 2" stroke="#777" />
          <circle cx="8" cy="7.500" r="6" fill="#dbe8e8" />
          <path d="M12 12L16.500 16.500" strokeWidth="3" />
        </NavButton>
      </div>
      <div className="flex items-center gap-[6px] bg-[#c8c8c8] px-[3px]">
        <NavButton label="Display Settings" caret tight>
          <rect x="1.500" y="2.500" width="15" height="11" fill="#fff" />
          <rect x="3.500" y="4.500" width="11" height="7" fill="#8fb6e6" stroke="#34669f" />
          <path d="M6.500 13.500V15.500H4.500V16.500H13.500V15.500H11.500V13.500" fill="#fff" />
        </NavButton>
        <NavButton label="Grid and Snaps" caret tight>
          <rect x="1.500" y="1.500" width="15" height="15" fill="#f5f5f5" />
          <path d="M1.500 4.500H16.500M1.500 7.500H16.500M1.500 10.500H16.500M1.500 13.500H16.500M4.500 1.500V16.500M7.500 1.500V16.500M10.500 1.500V16.500M13.500 1.500V16.500" stroke="#555" />
        </NavButton>
        <NavButton label="Viewports" caret tight>
          <path d="M1.500 2.500H8.500V8.500H1.500ZM9.500 2.500H16.500V8.500H9.500ZM1.500 9.500H8.500V15.500H1.500ZM9.500 9.500H16.500V15.500H9.500Z" fill="#a9c9ee" stroke="#274f86" />
          <path d="M3 5.500H7M11 5.500H15M3 12.500H7M11 12.500H15" stroke="#5d8fc9" />
        </NavButton>
      </div>
    </div>
  );
}

/* ---------- Chronologie ---------- */

const PLAYBACK = [
  { name: "Go to start", d: "M1 2V14H3V2ZM13 2V14L4 8Z" },
  { name: "Step back", d: "M9 2V14L1 8ZM11 5V11H13V5Z" },
  { name: "Play", d: "M2 1V15L13 8Z" },
  { name: "Step forward", d: "M5 2V14L13 8ZM1 5V11H3V5Z" },
  { name: "Go to end", d: "M1 2V14L10 8ZM11 2V14H13V2Z" },
];

type Feature = "sketch" | "extrude" | "body" | "joint" | "arrow" | "plane" | "link";

const FEATURES: Feature[] = [
  "sketch",
  "extrude",
  "body",
  "extrude",
  "joint",
  "arrow",
  "joint",
  "arrow",
  "plane",
  "plane",
  "plane",
  "link",
  "link",
];

function FeatureIcon({ kind }: { kind: Feature }) {
  return (
    <svg viewBox="0 0 16 16" className="size-4" fill="none" stroke="#333" aria-hidden="true">
      {kind === "sketch" && (
        <>
          <rect x="0.500" y="1.500" width="15" height="14" fill="#fff" stroke="#111" strokeWidth="1.500" />
          <path d="M6 11L13 2L16 4L9 13Z" fill="#f4d21f" stroke="#77610d" />
        </>
      )}
      {kind === "extrude" && (
        <>
          <path d="M1 5L4 1.500H10.500V12L8 15H1Z" fill="#a8c9ee" />
          <path d="M13.500 15V3M11.500 4.500L13.500 1.500L15.500 4.500" strokeWidth="1.500" />
        </>
      )}
      {kind === "body" && <path d="M0.500 6L5 1.500H15.500V10L11 15H0.500Z" fill="#f2f2f2" />}
      {kind === "joint" && <path d="M1 15V5C1 0.500 7 0.500 7 5V15Z" fill="#f4f4f4" strokeWidth="1.300" />}
      {kind === "arrow" && <path d="M8 15V3M5 5L8 1.500L11 5" strokeWidth="1.800" />}
      {kind === "plane" && <rect x="0.500" y="1.500" width="5" height="14" fill="#f4f4f4" />}
      {kind === "link" && (
        <>
          <path d="M2 8L6 2.500L8 3V10L3 14Z" fill="#ccc" />
          <path d="M8 9L10 3L13 7V14Z" fill="#e9b38a" />
        </>
      )}
    </svg>
  );
}

function Timeline() {
  return (
    <footer className="flex h-[22px] shrink-0 items-start overflow-hidden bg-[#cbcbcb] pl-[10px] pr-[6px] pt-[14px] text-[#444]">
      <div className="flex gap-[11px]">
        {PLAYBACK.map((control) => (
          <button key={control.name} type="button" aria-label={control.name}>
            <svg viewBox="0 0 14 16" className="h-4 w-[14px]" fill="currentColor">
              <path d={control.d} />
            </svg>
          </button>
        ))}
      </div>
      <div className="relative ml-[22px] flex gap-2">
        {FEATURES.map((kind, i) => (
          <button key={i} type="button" aria-label={`Feature ${i + 1}`}>
            <FeatureIcon kind={kind} />
          </button>
        ))}
        <svg viewBox="0 0 13 14" className="absolute -right-[10px] -top-[3px] h-[14px] w-[13px]" fill="#4c4c4c" aria-hidden="true">
          <path d="M0.500 0H12.500V4L8 9V14H5V9L0.500 4Z" />
        </svg>
      </div>
      <button type="button" aria-label="Timeline settings" className="ml-auto">
        <svg viewBox="0 0 16 16" className="size-4" fill="none" stroke="#4c4c4c">
          <circle cx="8" cy="8" r="4" strokeWidth="3" />
          <circle cx="8" cy="8" r="6.500" strokeWidth="2.500" strokeDasharray="2.600 2.500" />
        </svg>
      </button>
    </footer>
  );
}

export default function App() {
  return (
    <div className="flex h-screen w-full flex-col overflow-hidden bg-white font-['Liberation_Sans',Arial,sans-serif]">
      <SharedDefs />
      <div className="flex h-[10px] shrink-0 items-start justify-end gap-[39px] pr-[18px]">
        <span className="h-[2px] w-2 border border-t-0 border-black" />
        <svg viewBox="0 0 9 3" className="h-[3px] w-[9px]" stroke="#111" strokeWidth="1.200" aria-hidden="true">
          <path d="M0 3L3.500 0M5.500 0L9 3" />
        </svg>
      </div>
      <div className="flex min-h-0 flex-1 flex-col border-l-2 border-[#999] bg-[#ececec]">
        <TopBar />
        <TabBar />
        <main className="relative flex min-h-0 flex-1 flex-col">
          <ModelCanvas />
          <ViewCube />
          <Ribbon />
          <Browser />
          <div className="relative mt-auto grid grid-cols-[1fr_auto_1fr] items-end pb-1 pl-1">
            <PanelHeader title="COMMENTS" />
            <NavBar />
          </div>
        </main>
        <Timeline />
      </div>
    </div>
  );
}
